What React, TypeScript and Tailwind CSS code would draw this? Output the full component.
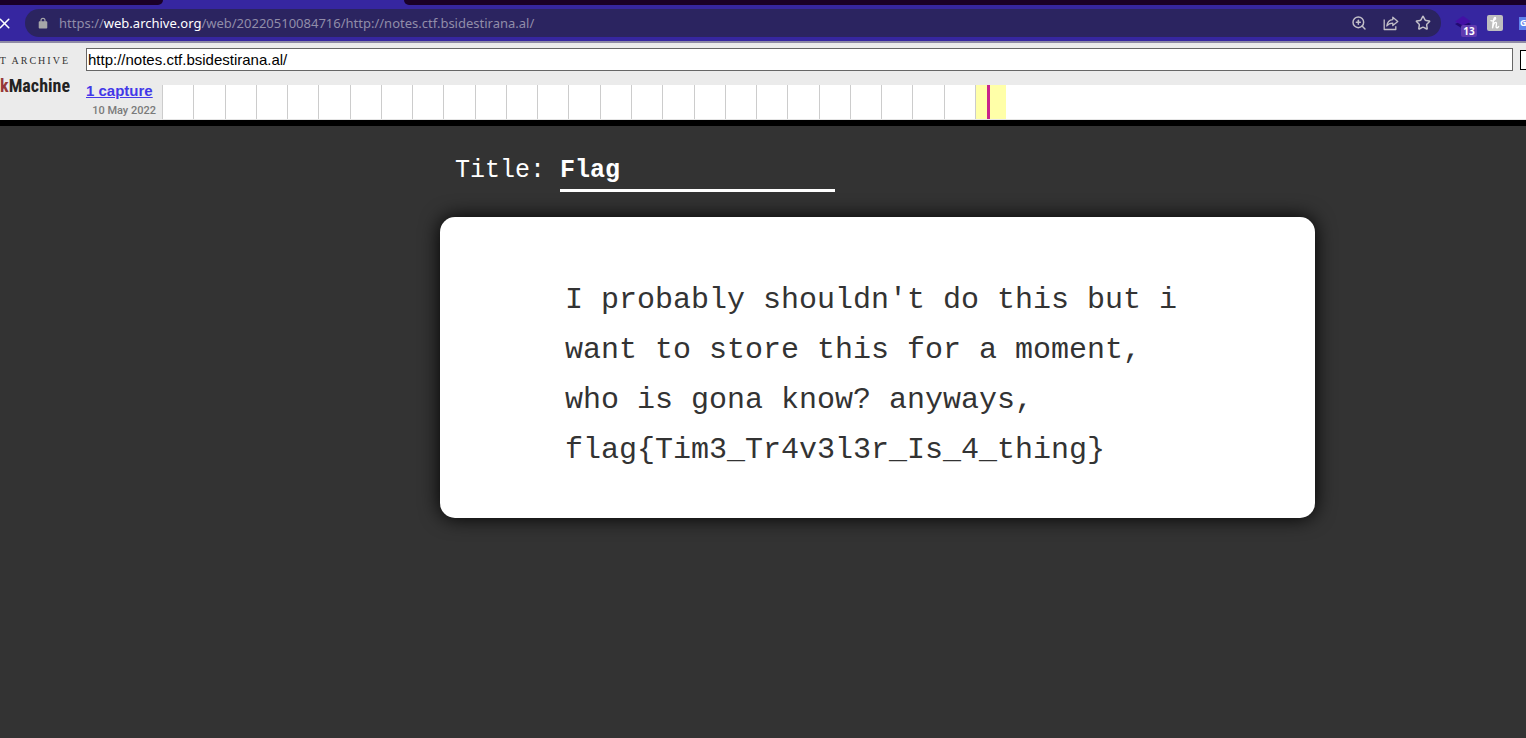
import { Star, X, ZoomIn } from "lucide-react";

const months = Array.from({ length: 26 }, (_, i) => i);

function ShareIcon() {
  return (
    <svg viewBox="0 0 16 16" className="size-4" fill="none" stroke="currentColor" strokeWidth="1.3" strokeLinejoin="round">
      <path d="M1.2 4.5v10h11.6v-3.2" />
      <path d="M9.8 2.2 14.8 6.4 9.8 10.6V8.2C7 8.2 5.2 9 3.8 11 4.2 7.2 6.2 4.9 9.8 4.6Z" />
    </svg>
  );
}

function BrowserBar() {
  return (
    <header className="bg-[#3626a0] font-['Noto_Sans','Open_Sans',sans-serif]">
      <div className="flex h-[5px]">
        <div className="w-[163px] rounded-br-[5px] bg-[#1a0028]" />
        <div className="w-[241px]" />
        <div className="flex-1 rounded-bl-[5px] bg-[#1a0028]" />
      </div>
      <div className="flex h-9 items-center overflow-hidden">
        <button aria-label="Stop loading" className="-ml-1 mr-3 text-white">
          <X className="size-[17px]" strokeWidth={2.2} />
        </button>
        <div className="flex h-7 min-w-0 flex-1 items-center rounded-full bg-[#2b2460] pl-3 pr-[10px] text-[#c2bfc8]">
          <svg viewBox="0 0 12 14" className="h-3 w-3 shrink-0 text-[#a6a6a8]" fill="currentColor" aria-hidden="true">
            <path d="M3 5V3.8a3 3 0 0 1 6 0V5h.7c.7 0 1.3.5 1.3 1.2v6c0 .7-.6 1.3-1.3 1.3H2.3C1.6 13.5 1 12.9 1 12.2v-6C1 5.5 1.6 5 2.3 5Zm1.4 0h3.2V3.8a1.6 1.6 0 0 0-3.2 0Z" />
          </svg>
          <div className="ml-[10px] flex-1 truncate pt-px text-[13px] text-[#918da9]">
            https://<span className="text-white">web.archive.org</span>
            /web/20220510084716/http://notes.ctf.bsidestirana.al/
          </div>
          <div className="flex gap-4">
            <button aria-label="Zoom"><ZoomIn className="size-4" strokeWidth={2.2} /></button>
            <button aria-label="Share"><ShareIcon /></button>
            <button aria-label="Bookmark"><Star className="size-4" strokeWidth={2.2} strokeLinejoin="miter" /></button>
          </div>
        </div>
        <div className="ml-[14px] flex w-[71px] shrink-0 items-center overflow-hidden">
          <button aria-label="Extension, 13 items" className="relative h-7 w-[22px] shrink-0">
            <svg viewBox="0 0 16 16" className="size-4" aria-hidden="true">
              <path d="M0 9 8 5l8 4-8 5Z" fill="#210a72" />
              <path d="M0 6.5 8 1l8 5.5-8 4Z" fill="#4310a5" />
            </svg>
            <span className="absolute bottom-0 left-[6px] flex h-3 w-4 items-center justify-center rounded-xs bg-[#603bb0] text-[10px] font-bold text-white">13</span>
          </button>
          <button aria-label="Honey" className="ml-[10px] flex size-4 shrink-0 items-center justify-center rounded-xs bg-[#bfbfbf]">
            <svg viewBox="0 0 16 16" className="size-4" fill="none" stroke="#fff" strokeWidth="1.4" strokeLinecap="round" strokeLinejoin="round">
              <path d="M4 5.6C6.5 6.6 9.4 4 8.4 2.6 7.2 1.6 6.2 5 5.6 12.8 6.300 9.4 7.6 7.200 9 7.400c1.500.4-.4 3.400.2 4.800.5 1 1.600.6 2.400-.6" />
            </svg>
          </button>
          <button aria-label="Translate" className="ml-4 flex h-[13px] w-4 shrink-0 items-center bg-[#5f82ec] pl-px text-[9px] font-bold text-white">G</button>
        </div>
      </div>
      <div className="h-[2px] bg-[#8f8ba5]" />
    </header>
  );
}

function ArchiveToolbar() {
  return (
    <section className="flex h-[83px] overflow-hidden border-b-[6px] border-black bg-[#ebebeb] font-['Liberation_Sans',Arial,sans-serif]">
      <a href="#wayback" aria-label="Internet Archive Wayback Machine" className="flex w-[70px] shrink-0 flex-col items-end overflow-hidden pt-3">
        <span className="whitespace-nowrap font-['Liberation_Serif',serif] text-[10px] leading-[12px] tracking-[2px] text-[#333]">T ARCHIVE</span>
        <span className="whitespace-nowrap font-['Roboto_Condensed','Roboto',sans-serif] text-[18px] font-bold leading-[38px] text-[#222]">
          <span className="text-[#963838]">k</span>Machine
        </span>
      </a>
      <div className="ml-4 flex min-w-0 flex-1 flex-col">
        <div className="flex items-center pt-[5px]">
          <input aria-label="Archived address" defaultValue="http://notes.ctf.bsidestirana.al/" className="h-[23px] min-w-0 flex-1 border border-[#666] bg-white px-px text-[15px] text-black" />
          <button aria-label="Go" className="ml-[7px] h-5 w-[6px] shrink-0 border border-r-0 border-black bg-white" />
        </div>
        <div className="mt-[14px] flex h-[35px]">
          <div className="w-[76px] shrink-0">
            <a href="#captures" className="-mt-[3px] block text-[15px] font-bold leading-[18px] text-[#4338e8] underline">1 capture</a>
            <div className="mr-[6px] mt-1 whitespace-nowrap text-right font-['Roboto',sans-serif] text-[11px] font-medium leading-[14px] text-[#7a7a7a]">10 May 2022</div>
          </div>
          <div className="flex flex-1 border-b border-[#e5e5e5] bg-white">
            <div className="grid w-[813px] shrink-0 grid-cols-26">
              {months.map((m) => (
                <div key={m} className="border-l border-[#ccc]" />
              ))}
            </div>
            <div className="w-[31px] shrink-0 border-l border-[#ccc] bg-[#ffffa8] pl-[11px]">
              <div className="h-full w-[3px] bg-[#c9248c]" />
            </div>
          </div>
        </div>
      </div>
    </section>
  );
}

export default function App() {
  return (
    <div className="flex min-h-screen flex-col bg-[#333]">
      <BrowserBar />
      <ArchiveToolbar />
      <main className="flex-1 pb-12 pl-[440px] pr-12 pt-[26px] font-['Liberation_Mono','Courier_New',monospace]">
        <div className="flex pl-[15px] text-[25px] text-white">
          <label htmlFor="title" className="w-[105px] leading-[38px]">Title:</label>
          <input id="title" defaultValue="Flag" className="h-10 w-[275px] border-b-[3px] border-white bg-transparent font-bold outline-none" />
        </div>
        <article className="mt-[25px] max-w-[875px] rounded-[15px] bg-white px-[125px] pb-[43px] pt-[58px] shadow-[0_0_20px_#000]">
          <p className="text-[30px] leading-[50px] text-[#333]">
            I probably shouldn't do this but i want to store this for a moment, who is gona know? anyways, flag&#123;Tim3_Tr4v3l3r_Is_4_thing&#125;
          </p>
        </article>
      </main>
    </div>
  );
}
